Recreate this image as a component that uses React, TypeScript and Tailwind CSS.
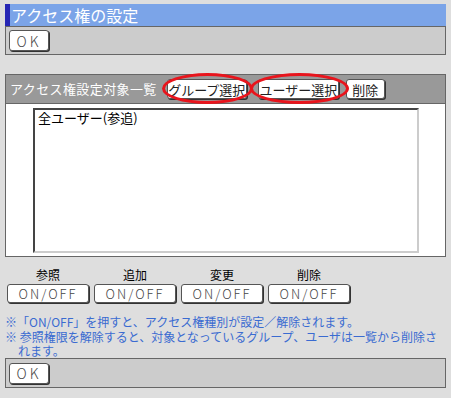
const font = { fontFamily: '"Noto Sans CJK JP", "Noto Sans", sans-serif' };

const Btn = ({ label, className = "" }: { label: string; className?: string }) => (
  <button
    className={`flex items-center justify-center bg-white border border-[#555] rounded-[3px] shadow-[1px_1px_0_#333] leading-none ${className}`}
  >
    {label}
  </button>
);

const perms = ["参照", "追加", "変更", "削除"];

const App = () => {
  return (
    <main className="w-[451px] h-[398px] bg-[#dedede] px-[5px] pt-[4px]" style={font}>
      <h1 className="h-[22px] bg-[#7ba4e8] border-l-[5px] border-[#2626b4] pl-[1px] text-white text-[16px] leading-[22px]">
        アクセス権の設定
      </h1>
      <div className="h-[29px] bg-[#cccccc] border border-[#666] flex items-center pl-[3px]">
        <Btn label="OK" className="w-[40px] h-[21px] text-[14px] tracking-[3px] text-[#444] font-light" />
      </div>

      <section className="mt-[19px] border border-[#666]">
        <div className="relative h-[29px] bg-[#999999] border-b border-[#666] flex items-center pl-[4px]">
          <span className="text-white text-[13px] tracking-[0.4px] mr-[10px]">アクセス権設定対象一覧</span>
          <Btn label="グループ選択" className="w-[80px] h-[20px] text-[13px] text-[#222]" />
          <Btn label="ユーザー選択" className="w-[81px] h-[20px] text-[13px] ml-[11px] text-[#222]" />
          <Btn label="削除" className="w-[39px] h-[20px] text-[13px] ml-[7px] text-[#222]" />
          <div className="absolute left-[156px] top-[-2px] w-[91px] h-[31px] rounded-[50%] border-[3px] border-[#e8141c]" />
          <div className="absolute left-[244px] top-[-2px] w-[99px] h-[31px] rounded-[50%] border-[3px] border-[#e8141c]" />
        </div>
        <div className="h-[152px] bg-white pl-[27px] pt-[4px]">
          <div className="w-[386px] h-[145px] border-2 border-t-[#444] border-l-[#444] border-b-[#ccc] border-r-[#ccc] px-[3px] text-[13px] leading-[16px] text-black">
            全ユーザー(参追)
          </div>
        </div>
      </section>

      <div className="mt-[10px] flex gap-[5px] pl-[2px]">
        {perms.map((p) => (
          <div key={p} className="flex flex-col items-center w-[82px]">
            <span className="text-[12px] leading-[16px] h-[17px] text-black">{p}</span>
            <Btn label="ON/OFF" className="w-[82px] h-[19px] text-[13px] tracking-[2px] text-[#444] font-light" />
          </div>
        ))}
      </div>

      <div className="mt-[11px] text-[12px] text-[#3a6bd1]">
        <p className="leading-[15px]">※「ON/OFF」を押すと、アクセス権種別が設定／解除されます。</p>
        <p className="mt-[1px] leading-[14px] pl-[13px] -indent-[13px]">
          ※ 参照権限を解除すると、対象となっているグループ、ユーザは一覧から削除さ
          <br />
          れます。
        </p>
      </div>

      <div className="h-[30px] bg-[#cccccc] border border-[#666] flex items-center pl-[3px]">
        <Btn label="OK" className="w-[40px] h-[21px] text-[14px] tracking-[3px] text-[#444] font-light" />
      </div>
    </main>
  );
};

export default App;
